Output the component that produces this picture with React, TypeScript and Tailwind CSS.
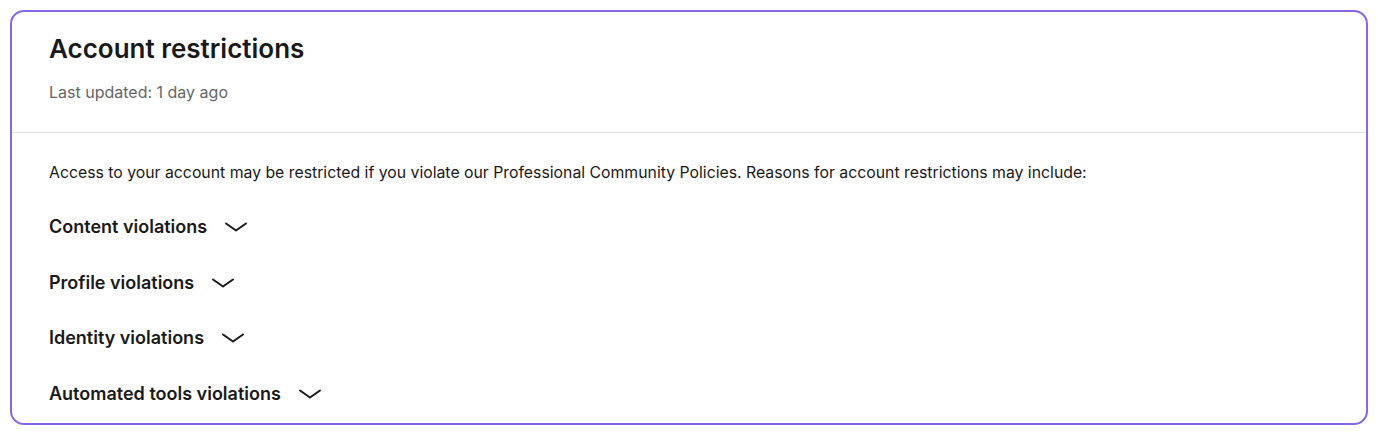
import React from "react";

function Chevron() {
  return (
    <svg width="24" height="12" viewBox="0 0 24 12" fill="none" className="shrink-0">
      <path d="M2 2.5 L12 9.5 L22 2.5" stroke="#1a1a1a" strokeWidth="2" strokeLinecap="round" strokeLinejoin="round" />
    </svg>
  );
}

const items = ["Content violations", "Profile violations", "Identity violations", "Automated tools violations"];

export default function App() {
  return (
    <div className="bg-white p-[10px] w-[1378px] h-[435px]" style={{ fontFamily: "Inter, 'Noto Sans', sans-serif" }}>
      <div className="border-2 border-[#8466ea] rounded-[14px] h-[415px] overflow-hidden">
        <div className="px-[37px] pt-[20px] pb-[30px] border-b border-[#e3e3e3]">
          <h1 className="text-[26px] font-semibold text-[#191919] leading-[34px]">Account restrictions</h1>
          <p className="mt-[16px] text-[16px] text-[#666666] leading-[20px]">Last updated: 1 day ago</p>
        </div>
        <div className="px-[37px] pt-[29px]">
          <p className="text-[15.8px] text-[#191919] leading-[22px]">
            Access to your account may be restricted if you violate our Professional Community Policies. Reasons for account restrictions may include:
          </p>
          <div className="mt-[30px] flex flex-col gap-[29.6px]">
            {items.map((t) => (
              <div key={t} className="flex items-center gap-[17px] h-[26px]">
                <span className="text-[18px] font-semibold text-[#191919] leading-[26px]">{t}</span>
                <Chevron />
              </div>
            ))}
          </div>
        </div>
      </div>
    </div>
  );
}
